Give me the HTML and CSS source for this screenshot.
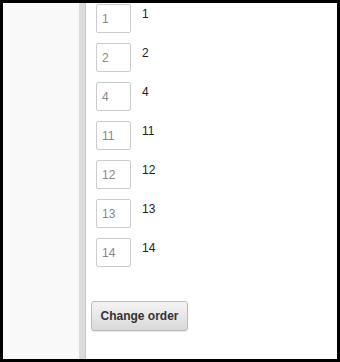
FILE: index.html
```html
<!DOCTYPE html>
<html lang="en">
<head>
    <meta charset="UTF-8">
    <title>Change order</title>
    <link rel="stylesheet" href="styles.css">
</head>
<body>
    <div class="frame">
        <div class="sidebar"></div>
        <div class="divider"></div>
        <div class="content">
            <form class="order-form">
                <div class="row"><input type="text" value="1"><span class="name">1</span></div>
                <div class="row"><input type="text" value="2"><span class="name">2</span></div>
                <div class="row"><input type="text" value="4"><span class="name">4</span></div>
                <div class="row"><input type="text" value="11"><span class="name">11</span></div>
                <div class="row"><input type="text" value="12"><span class="name">12</span></div>
                <div class="row"><input type="text" value="13"><span class="name">13</span></div>
                <div class="row"><input type="text" value="14"><span class="name">14</span></div>
                <button type="button" class="btn">Change order</button>
            </form>
        </div>
    </div>
</body>
</html>
```

FILE: styles.css
```css
body {
    margin: 0;
    padding: 0;
    font-family: "Liberation Sans", Arial, sans-serif;
    font-size: 12px;
    color: #222;
}
.frame {
    width: 340px;
    height: 362px;
    box-sizing: border-box;
    border: 3px solid #000;
    display: flex;
    overflow: hidden;
    background: #fff;
}
.sidebar {
    width: 76px;
    background-color: #f9f9f9;
}
.divider {
    width: 6px;
    background-color: #dcdcdc;
    border-right: 1px solid #c8c8c8;
}
.content {
    flex: 1;
    padding: 1px 0 0 5px;
}
.row {
    display: flex;
    align-items: flex-start;
    margin: 0 0 10px 5px;
}
.row input {
    width: 35px;
    height: 29px;
    box-sizing: border-box;
    border: 1px solid #ccc;
    border-radius: 2px;
    padding: 0 0 0 5px;
    margin: 0;
    font-family: "Liberation Sans", Arial, sans-serif;
    font-size: 12px;
    color: #888;
    background: #fff;
}
.name {
    margin-left: 11px;
    padding-top: 3px;
    line-height: 14px;
}
.btn {
    margin-top: 24px;
    height: 30px;
    width: 97px;
    padding: 0;
    border: 1px solid #bbb;
    border-radius: 3px;
    background: linear-gradient(#f4f4f4, #d9d9d9);
    box-shadow: 0 1px 1px rgba(0, 0, 0, 0.1);
    font-family: "Liberation Sans", Arial, sans-serif;
    font-size: 12px;
    font-weight: bold;
    color: #333;
}
```
